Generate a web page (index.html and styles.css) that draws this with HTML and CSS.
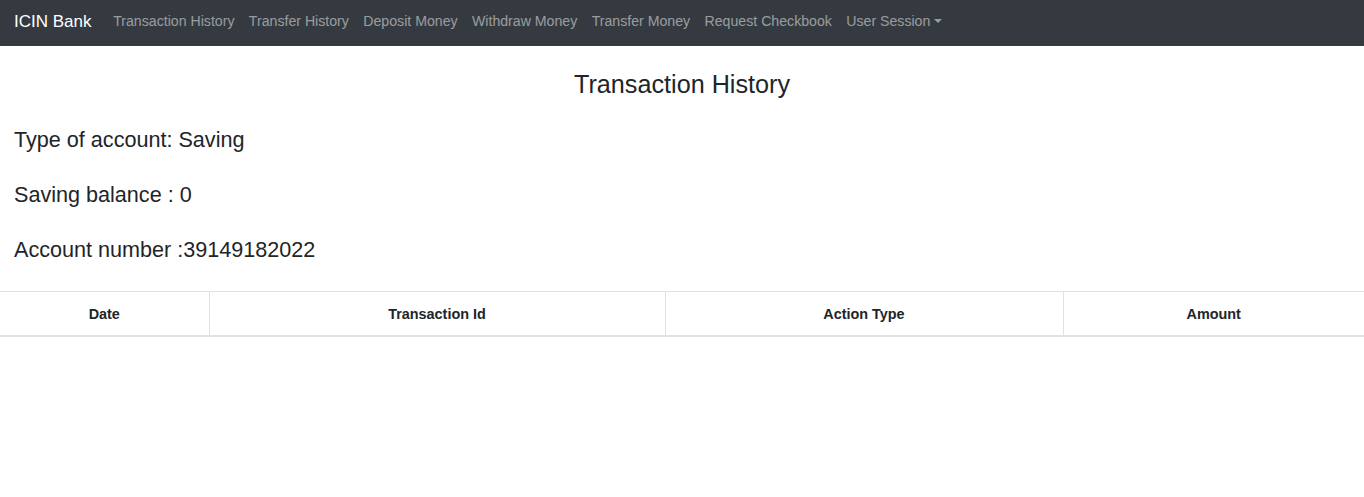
FILE: index.html
```html
<!DOCTYPE html>
<html lang="en">
<head>
<meta charset="utf-8">
<title>ICIN Bank - Transaction History</title>
<link rel="stylesheet" href="styles.css">
</head>
<body>
<nav class="navbar">
  <a class="brand" href="#">ICIN Bank</a>
  <ul class="nav">
    <li><a class="nav-link" href="#">Transaction History</a></li>
    <li><a class="nav-link" href="#">Transfer History</a></li>
    <li><a class="nav-link" href="#">Deposit Money</a></li>
    <li><a class="nav-link" href="#">Withdraw Money</a></li>
    <li><a class="nav-link" href="#">Transfer Money</a></li>
    <li><a class="nav-link" href="#">Request Checkbook</a></li>
    <li><a class="nav-link dropdown" href="#">User Session<span class="caret"></span></a></li>
  </ul>
</nav>
<main>
  <h3 class="title">Transaction History</h3>
  <section class="info">
    <h4 class="info-line">Type of account: Saving</h4>
    <h4 class="info-line">Saving balance : 0</h4>
    <h4 class="info-line">Account number :39149182022</h4>
  </section>
  <table class="table">
    <colgroup>
      <col class="c1"><col class="c2"><col class="c3"><col class="c4">
    </colgroup>
    <thead>
      <tr>
        <th>Date</th>
        <th>Transaction Id</th>
        <th>Action Type</th>
        <th>Amount</th>
      </tr>
    </thead>
    <tbody></tbody>
  </table>
</main>
</body>
</html>
```
FILE: styles.css
```css
* { box-sizing: border-box; }
body {
  margin: 0;
  font-family: "Liberation Sans", Arial, sans-serif;
  color: #212529;
  background: #fff;
  font-size: 14.4px;
  line-height: 1.5;
}
a { text-decoration: none; }
.navbar {
  background: #343a40;
  height: 46px;
  display: flex;
  align-items: center;
  padding: 0 14px 2px;
}
.brand {
  color: #fff;
  font-size: 17px;
  margin-right: 14.5px;
  line-height: 1.5;
}
.nav {
  list-style: none;
  display: flex;
  margin: 0;
  padding: 0;
}
.nav-link {
  display: block;
  color: rgba(255,255,255,.5);
  padding: 0 7.2px;
  font-size: 14.15px;
}
.caret {
  display: inline-block;
  margin-left: 3.7px;
  vertical-align: 3.5px;
  border-top: 4.3px solid;
  border-left: 4.3px solid transparent;
  border-right: 4.3px solid transparent;
}
.title {
  margin: 23px 0 0;
  text-align: center;
  font-size: 25.2px;
  font-weight: 500;
  line-height: 30px;
}
.info {
  padding: 0 14px;
  margin-top: 28px;
  display: flex;
  flex-direction: column;
  gap: 29px;
}
.info-line {
  margin: 0;
  font-size: 21.6px;
  font-weight: 500;
  line-height: 26px;
}
.table {
  width: 100%;
  margin-top: 28px;
  border-collapse: collapse;
  table-layout: fixed;
}
.c1 { width: 209px; }
.c2 { width: 456px; }
.c3 { width: 398px; }
.c4 { width: auto; }
.table th {
  padding: 11.6px 10.8px 10px;
  border-top: 1px solid #dee2e6;
  border-bottom: 2px solid #dee2e6;
  border-left: 1px solid #dee2e6;
  text-align: center;
  font-weight: 700;
  line-height: 21.6px;
}
.table th:first-child { border-left: none; }
```
